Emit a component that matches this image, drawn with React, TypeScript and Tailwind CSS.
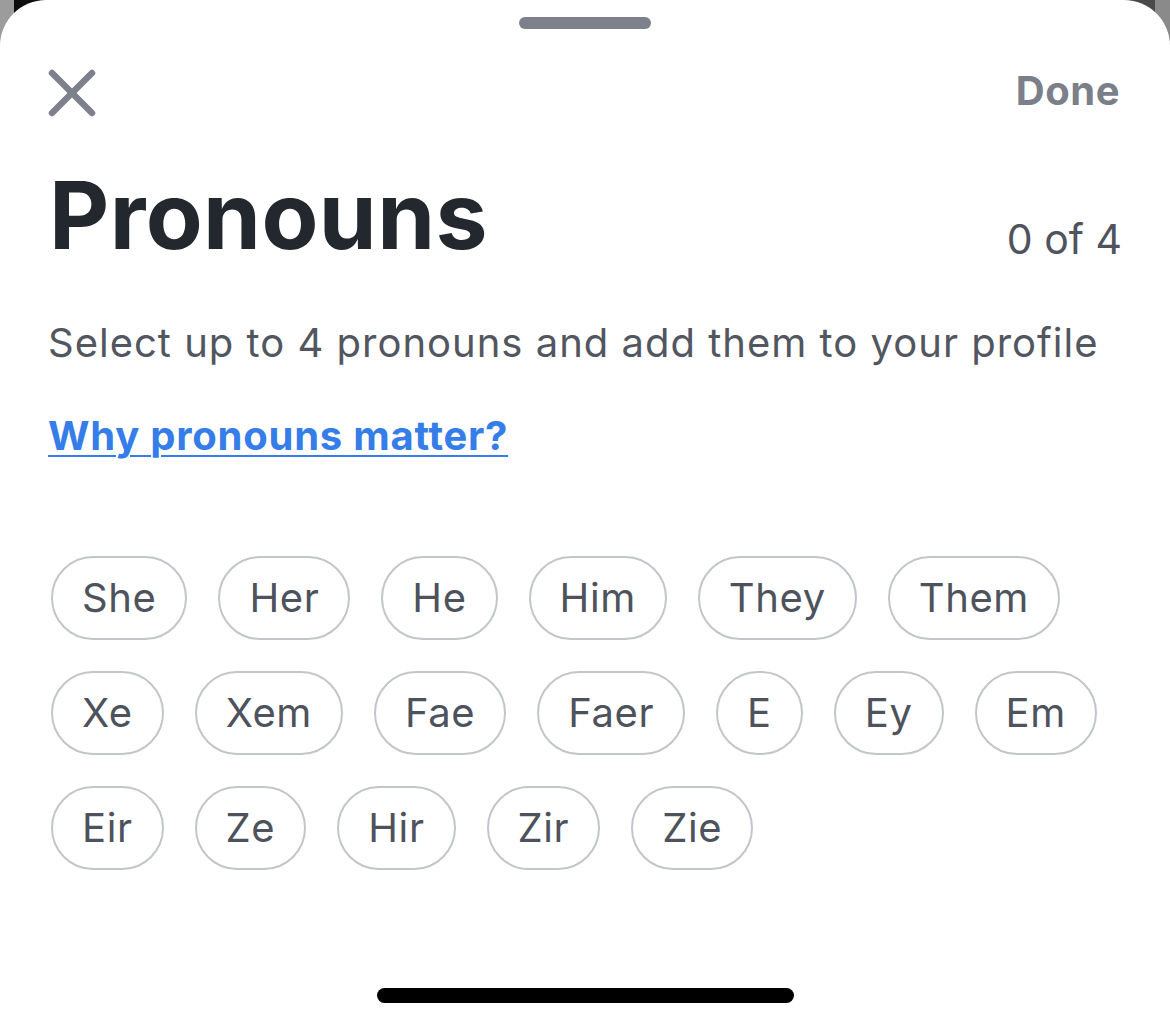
import { useState } from "react";

const PRONOUN_ROWS = [
  ["She", "Her", "He", "Him", "They", "Them"],
  ["Xe", "Xem", "Fae", "Faer", "E", "Ey", "Em"],
  ["Eir", "Ze", "Hir", "Zir", "Zie"],
];

const MAX = 4;

function CloseIcon() {
  return (
    <svg width="48" height="48" viewBox="0 0 48 48" fill="none" stroke="currentColor" strokeWidth="6.5" strokeLinecap="round">
      <line x1="4" y1="4" x2="44" y2="44" />
      <line x1="44" y1="4" x2="4" y2="44" />
    </svg>
  );
}

function Chip({ label, selected, onClick }: { label: string; selected: boolean; onClick: () => void }) {
  return (
    <button
      onClick={onClick}
      className={`h-[84px] px-[29px] rounded-full border-[2.5px] text-[40px] leading-none tracking-[0.6px] flex items-center ${
        selected ? "border-[#357de8] text-[#357de8]" : "border-[#c3c5cc] text-[#4d525c]"
      }`}
    >
      {label}
    </button>
  );
}

export default function App() {
  const [selected, setSelected] = useState<string[]>([]);

  const toggle = (p: string) => {
    setSelected((prev) =>
      prev.includes(p) ? prev.filter((x) => x !== p) : prev.length < MAX ? [...prev, p] : prev
    );
  };

  return (
    <div className="w-[1170px] h-[1027px] bg-[linear-gradient(to_right,#9c9c9c_14px,#0e0e0e_14px,#0e0e0e_1120px,#4a4a4a_1120px,#4a4a4a_1155px,#8a8a8a_1155px)] font-['Inter',sans-serif]">
      <div className="h-full bg-white rounded-t-[46px] flex flex-col px-[48px]">
        {/* grab handle */}
        <div className="mt-[17px] self-center w-[132px] h-[12px] rounded-full bg-[#7d818c]" />

        {/* top bar */}
        <div className="mt-[40px] flex items-center justify-between h-[48px]">
          <button className="text-[#7d818c]">
            <CloseIcon />
          </button>
          <button className="text-[40px] font-bold text-[#7b7f8a] leading-none tracking-[0.5px] mr-[2px] -mt-[4px]">Done</button>
        </div>

        {/* title */}
        <div className="mt-[52px] flex items-end justify-between">
          <h1 className="text-[93px] font-bold text-[#23272e] leading-none tracking-[0.4px] ml-[1px]">Pronouns</h1>
          <span className="text-[41px] text-[#4f535d] leading-none mb-[2px]">
            {selected.length} of {MAX}
          </span>
        </div>

        <p className="mt-[61px] text-[40px] text-[#52565f] leading-none tracking-[1px]">
          Select up to 4 pronouns and add them to your profile
        </p>

        <a href="#" className="mt-[53px] text-[40px] font-bold text-[#357de8] leading-none tracking-[0.75px] underline underline-offset-[5px] decoration-[2px] self-start">
          Why pronouns matter?
        </a>

        {/* chips */}
        <div className="mt-[100px] flex flex-col gap-[31px] pl-[3px]">
          {PRONOUN_ROWS.map((row, i) => (
            <div key={i} className="flex gap-[31px]">
              {row.map((p) => (
                <Chip key={p} label={p} selected={selected.includes(p)} onClick={() => toggle(p)} />
              ))}
            </div>
          ))}
        </div>

        <div className="mt-auto mb-[24px] self-center w-[417px] h-[15px] rounded-full bg-black" />
      </div>
    </div>
  );
}
